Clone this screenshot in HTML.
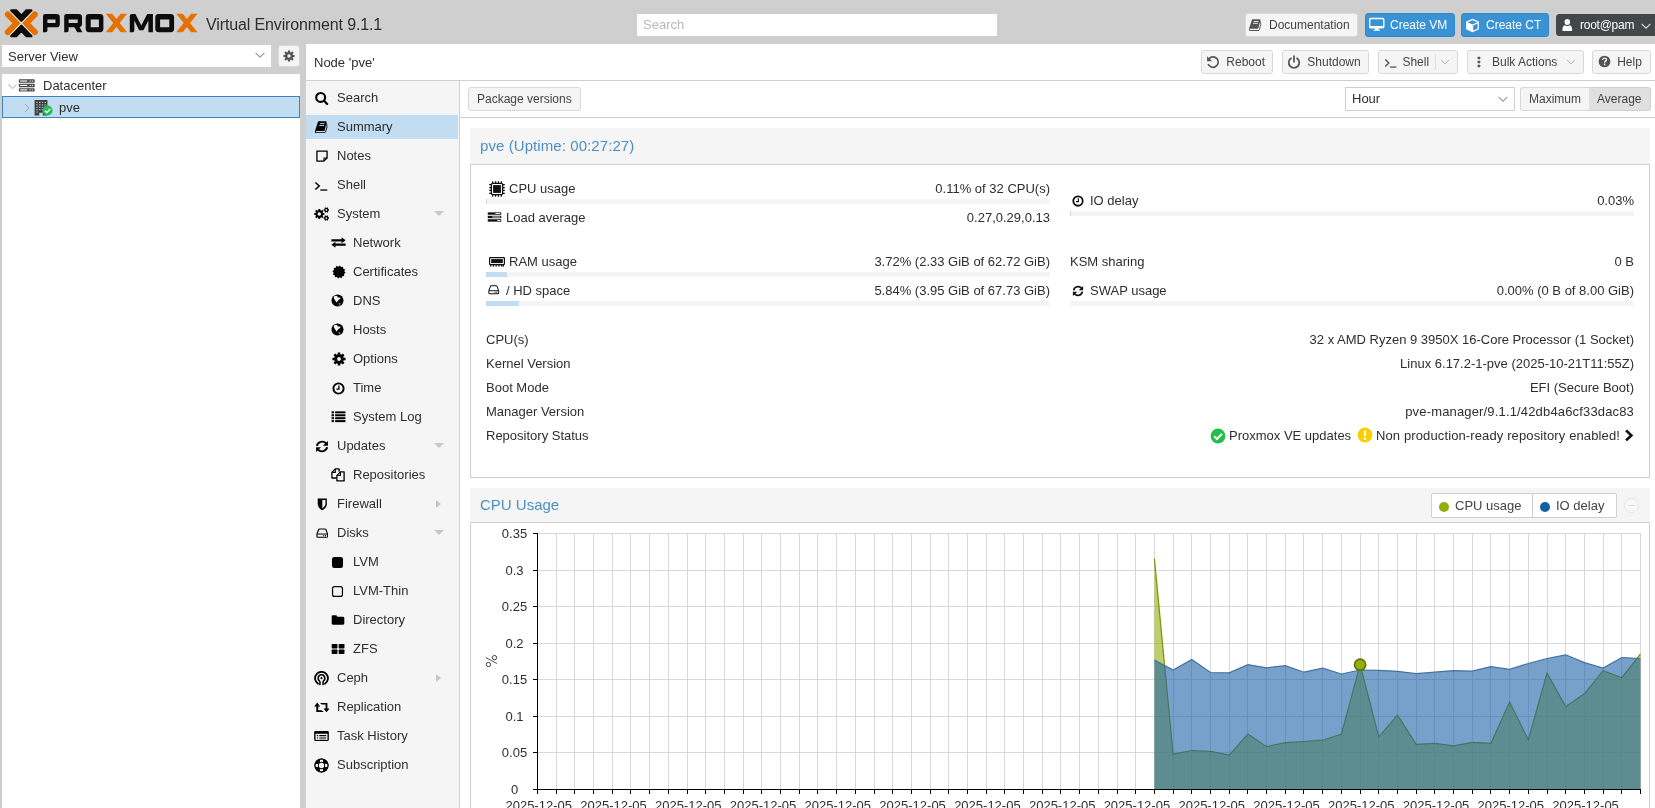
<!DOCTYPE html>
<html>
<head>
<meta charset="utf-8">
<title>pve - Proxmox Virtual Environment</title>
<style>
*{box-sizing:border-box;margin:0;padding:0}
html,body{width:1655px;height:808px;overflow:hidden;background:#cfcfcf;font-family:"Liberation Sans",sans-serif;font-size:13px;color:#2e2e2e}
div,span{position:absolute;white-space:nowrap}
.bx{background:#fff}
.btn{height:24px;border:1px solid #d8d8d8;background:#f5f5f5;border-radius:3px;color:#444;font-size:12px;line-height:22px}
.btn span{top:0}
.blue{background:#3892d4;border-color:#2f87ca;color:#fff}
.dark{background:#424748;border-color:#424748;color:#fff;border-radius:3px 0 0 3px}
.ni{left:306px;width:152px;height:24px;line-height:24px;font-size:13px}
.ni span{left:31px;top:0}
.sub span{left:47px}
.exp{width:0;height:0;border-left:5px solid transparent;border-right:5px solid transparent;border-top:5.5px solid #c8c8c8}
.col{width:0;height:0;border-top:4.5px solid transparent;border-bottom:4.5px solid transparent;border-left:5.5px solid #c8c8c8}
.l{font-size:13px;line-height:16px}
.v{font-size:13px;line-height:16px;text-align:right}
.bar{height:5px;background:#f5f5f5}
.bar i{position:absolute;left:0;top:0;height:5px;background:#c2ddf1;display:block}
.ph{background:#f5f5f5;color:#4a8fc4;font-size:15px}
</style>
</head>
<body>
<div id="w" style="left:0;top:0;width:1655px;height:808px;will-change:transform">
<svg style="position:absolute;left:0;top:0" width="204" height="44" viewBox="0 0 204 44"><path d="M10.92 12.45L31.76 34.03M31.76 12.45L10.92 34.03" stroke="#ebe4da" stroke-width="1.6" fill="none"/><path d="M21.34 20.65L11.39 10.35L16.12 10.35L21.34 15.75L26.56 10.35L31.29 10.35Z M21.34 25.83L11.39 36.13L16.12 36.13L21.34 30.73L26.56 36.13L31.29 36.13Z" fill="#0c0c0c" stroke="#0c0c0c" stroke-width="2.4" stroke-linejoin="round"/><path d="M7.81 14.34L16.40 23.24L7.81 32.14 M34.87 14.34L26.28 23.24L34.87 32.14" fill="none" stroke="#e57000" stroke-width="5.9" stroke-linecap="round" stroke-linejoin="miter"/><g fill="#0c0c0c" fill-rule="evenodd"><path d="M43 32.2V16.2Q43 14 45.2 14H56.6Q59.8 14 59.8 17.2V24.2Q59.8 27.3 56.6 27.3H47.4V30.6Q47.4 32.2 45.8 32.2Z M47.4 19.6H55.5V23H47.4Z"/><path d="M64.2 32.2V16.2Q64.2 14 66.4 14H78.8Q82 14 82 17.2V24.2Q82 26.8 79.6 27.2L82.4 32.2H77.2L74.4 27.3H68.6V30.6Q68.6 32.2 67 32.2Z M68.6 19.6H77.7V23H68.6Z"/><path d="M85.7 17.4Q85.7 14 89.1 14H100Q103.4 14 103.4 17.4V28.8Q103.4 32.2 100 32.2H89.1Q85.7 32.2 85.7 28.8Z M90.7 19.6H98.9V27.2H90.7Z"/><path d="M129.8 32.2V16Q129.8 14 131.8 14H135.4L141.3 25.4L147.2 14H152.9V32.2H148.4V20.6L143.4 30.3H139.2L134.3 20.6V30.6Q134.3 32.2 132.7 32.2Z"/><path d="M155.3 17.4Q155.3 14 158.7 14H170.7Q174.1 14 174.1 17.4V28.8Q174.1 32.2 170.7 32.2H158.7Q155.3 32.2 155.3 28.8Z M160.1 19.6H169.3V27.2H160.1Z"/></g><g fill="#e57000"><path d="M105.8 13.8H112.2L127.1 32.3H120.69999999999999Z M120.69999999999999 13.8H127.1L112.2 32.3H105.8Z"/><path d="M176.3 13.8H182.70000000000002L197.5 32.3H191.1Z M191.1 13.8H197.5L182.70000000000002 32.3H176.3Z"/></g></svg>
<div style="left:206px;top:14px;font-size:16px;line-height:22px;letter-spacing:-0.13px">Virtual Environment 9.1.1</div>
<div class="bx" style="left:637px;top:14px;width:360px;height:22px;color:#b8b8b8;line-height:22px;padding-left:6px">Search</div>
<div class="btn " style="left:1245px;top:13px;width:113px;"><svg style="position:absolute;left:3.2px;top:4.9px;color:#555" width="12.8" height="12" viewBox="0 0 13 12.4" preserveAspectRatio="none"><path d="M3.7 0.2H11Q11.9 0.2 11.6 1.1L9.6 9.4Q9.4 10 8.8 10H0.7Q-0.1 10 0.2 9.2L3 0.8Q3.2 0.2 3.7 0.2Z" fill="currentColor"/><path d="M4.9 2.6H9.6M4.2 4.5H9" stroke="#f5f5f5" stroke-width="0.9"/><path d="M0.6 9.7Q-0.3 11.8 1.5 11.8H10.3" fill="none" stroke="currentColor" stroke-width="1.1"/><path d="M11.5 2.2Q13 5 10.5 11.2" fill="none" stroke="currentColor" stroke-width="0.9"/></svg><span style="left:23px">Documentation</span></div>
<div class="btn blue" style="left:1365px;top:13px;width:90px;"><svg style="position:absolute;left:3.3px;top:3.2px;color:#fff" width="15.5" height="15" viewBox="0 0 16 16" preserveAspectRatio="none"><rect x="0.7" y="1.6" width="14.6" height="10" rx="1.2" fill="none" stroke="currentColor" stroke-width="1.4"/><path d="M0.7 9.6H15.3V11.6H0.7Z" fill="currentColor"/><path d="M6.4 11.6H9.6L10 13.6H11.4V14.6H4.6V13.6H6Z" fill="currentColor"/></svg><span style="left:24px">Create VM</span></div>
<div class="btn blue" style="left:1461px;top:13px;width:88px;"><svg style="position:absolute;left:3px;top:3.5px;color:#fff" width="15" height="15" viewBox="0 0 16 16" preserveAspectRatio="none"><path d="M8 0.8L14.8 3.6V12L8 15.2L1.2 12V3.6Z" fill="currentColor"/><path d="M2.6 4.4L8 6.8L13.4 4.4L8 2.3Z" fill="#3892d4"/><path d="M8.7 8V13.4L13.5 11.2V5.9Z" fill="#3892d4"/></svg><span style="left:24px">Create CT</span></div>
<div class="btn dark" style="left:1556px;top:14px;width:110px;letter-spacing:-0.25px;height:22px;line-height:20px"><svg style="position:absolute;left:3.6px;top:2.6px;color:#fff" width="12.6" height="13.6" viewBox="0 0 16 16" preserveAspectRatio="none"><circle cx="8" cy="4.6" r="3.5" fill="currentColor"/><path d="M1.8 14.6Q1.8 8.6 5 8.4Q6.4 9.4 8 9.4Q9.6 9.4 11 8.4Q14.2 8.6 14.2 14.6Q14.2 15.2 13 15.2H3Q1.8 15.2 1.8 14.6Z" fill="currentColor"/></svg><span style="left:23px">root@pam</span></div>
<svg style="position:absolute;left:1639px;top:19px;color:#ddd" width="14" height="14" viewBox="0 0 16 16" preserveAspectRatio="none"><path d="M3 5.5L8 10.5L13 5.5" fill="none" stroke="currentColor" stroke-width="1.3"/></svg>
<div class="bx" style="left:2px;top:45px;width:269px;height:22px;line-height:24px;padding-left:6px">Server View</div>
<svg style="position:absolute;left:253px;top:48.3px;color:#999" width="14" height="14" viewBox="0 0 16 16" preserveAspectRatio="none"><path d="M3 5.5L8 10.5L13 5.5" fill="none" stroke="currentColor" stroke-width="1.3"/></svg>
<div style="left:278px;top:45px;width:22px;height:22px;background:#f5f5f5;border:1px solid #d8d8d8;border-radius:3px"><svg style="position:absolute;left:4px;top:4px;color:#555" width="12" height="12" viewBox="0 0 16 16" preserveAspectRatio="none"><path fill-rule="evenodd" fill="currentColor" d="M13.30 6.52 L15.47 6.60 L15.47 9.40 L13.30 9.48 L12.79 10.70 L14.27 12.30 L12.30 14.27 L10.70 12.79 L9.48 13.30 L9.40 15.47 L6.60 15.47 L6.52 13.30 L5.30 12.79 L3.70 14.27 L1.73 12.30 L3.21 10.70 L2.70 9.48 L0.53 9.40 L0.53 6.60 L2.70 6.52 L3.21 5.30 L1.73 3.70 L3.70 1.73 L5.30 3.21 L6.52 2.70 L6.60 0.53 L9.40 0.53 L9.48 2.70 L10.70 3.21 L12.30 1.73 L14.27 3.70 L12.79 5.30Z M5.80 8.00 a2.20 2.20 0 1 0 4.40 0 a2.20 2.20 0 1 0 -4.40 0Z"/></svg></div>
<div class="bx" style="left:2px;top:74px;width:298px;height:734px"></div>
<svg style="position:absolute;left:6px;top:80px;color:#bbb" width="13" height="13" viewBox="0 0 16 16" preserveAspectRatio="none"><path d="M3 5.5L8 10.5L13 5.5" fill="none" stroke="currentColor" stroke-width="1.3"/></svg>
<svg style="position:absolute;left:17.5px;top:78px;color:#484848" width="17.5" height="15" viewBox="0 0 16 16" preserveAspectRatio="none"><rect x="0.8" y="1.4" width="14.4" height="3.7" rx="0.6" fill="currentColor"/><rect x="2" y="2.6" width="6.5" height="1.2" fill="#fff"/><rect x="10.6" y="2.6" width="1" height="1.2" fill="#fff"/><rect x="12.6" y="2.6" width="1" height="1.2" fill="#fff"/><rect x="0.8" y="6.1" width="14.4" height="3.7" rx="0.6" fill="currentColor"/><rect x="2" y="7.3" width="6.5" height="1.2" fill="#fff"/><rect x="10.6" y="7.3" width="1" height="1.2" fill="#fff"/><rect x="12.6" y="7.3" width="1" height="1.2" fill="#fff"/><rect x="0.8" y="10.8" width="14.4" height="3.7" rx="0.6" fill="currentColor"/><rect x="2" y="12.1" width="6.5" height="1.2" fill="#fff"/><rect x="10.6" y="12.1" width="1" height="1.2" fill="#fff"/><rect x="12.6" y="12.1" width="1" height="1.2" fill="#fff"/></svg>
<div style="left:43px;top:75px;line-height:22px">Datacenter</div>
<div style="left:2px;top:96px;width:298px;height:22px;background:#c2ddf1;border:1px solid #3a84c2"></div>
<svg style="position:absolute;left:21px;top:101.5px;color:#8fa3b8;transform:rotate(-90deg)" width="12" height="12" viewBox="0 0 16 16" preserveAspectRatio="none"><path d="M3 5.5L8 10.5L13 5.5" fill="none" stroke="currentColor" stroke-width="1.3"/></svg>
<svg style="position:absolute;left:32.5px;top:99px;color:#3e3e3e" width="16" height="17.5" viewBox="0 0 16 16" preserveAspectRatio="none"><path d="M1.6 1H14.4V15H9.8V12.6H6.2V15H1.6Z" fill="currentColor"/><rect x="3.3" y="2.6" width="1.5" height="1.1" fill="#c2ddf1" opacity="0.75"/><rect x="3.3" y="4.8" width="1.5" height="1.1" fill="#c2ddf1" opacity="0.75"/><rect x="3.3" y="7.0" width="1.5" height="1.1" fill="#c2ddf1" opacity="0.75"/><rect x="3.3" y="9.2" width="1.5" height="1.1" fill="#c2ddf1" opacity="0.75"/><rect x="3.3" y="11.4" width="1.5" height="1.1" fill="#c2ddf1" opacity="0.75"/><rect x="6.0" y="2.6" width="1.5" height="1.1" fill="#c2ddf1" opacity="0.75"/><rect x="6.0" y="4.8" width="1.5" height="1.1" fill="#c2ddf1" opacity="0.75"/><rect x="6.0" y="7.0" width="1.5" height="1.1" fill="#c2ddf1" opacity="0.75"/><rect x="6.0" y="9.2" width="1.5" height="1.1" fill="#c2ddf1" opacity="0.75"/><rect x="8.7" y="2.6" width="1.5" height="1.1" fill="#c2ddf1" opacity="0.75"/><rect x="8.7" y="4.8" width="1.5" height="1.1" fill="#c2ddf1" opacity="0.75"/><rect x="8.7" y="7.0" width="1.5" height="1.1" fill="#c2ddf1" opacity="0.75"/><rect x="8.7" y="9.2" width="1.5" height="1.1" fill="#c2ddf1" opacity="0.75"/><rect x="11.4" y="2.6" width="1.5" height="1.1" fill="#c2ddf1" opacity="0.75"/><rect x="11.4" y="4.8" width="1.5" height="1.1" fill="#c2ddf1" opacity="0.75"/><rect x="11.4" y="7.0" width="1.5" height="1.1" fill="#c2ddf1" opacity="0.75"/><rect x="11.4" y="9.2" width="1.5" height="1.1" fill="#c2ddf1" opacity="0.75"/><rect x="11.4" y="11.4" width="1.5" height="1.1" fill="#c2ddf1" opacity="0.75"/></svg>
<svg style="position:absolute;left:42.3px;top:105.3px;color:#21bf4b" width="11" height="11" viewBox="0 0 16 16" preserveAspectRatio="none"><circle cx="8" cy="8" r="7.4" fill="currentColor"/><path d="M4.2 8.2L7 11L12 5.8" fill="none" stroke="#fff" stroke-width="2.1"/></svg>
<div style="left:59px;top:97px;line-height:22px">pve</div>
<div class="bx" style="left:306px;top:44px;width:1349px;height:764px"></div>
<div style="left:306px;top:80px;width:1349px;height:1px;background:#cfcfcf"></div>
<div class="l" style="left:314px;top:55px">Node 'pve'</div>
<div class="btn " style="left:1201px;top:50px;width:72px;"><svg style="position:absolute;left:4px;top:4px;color:#555" width="14" height="14" viewBox="0 0 16 16" preserveAspectRatio="none"><path d="M3.4 4.2A6 6 0 1 1 2.4 10.2" fill="none" stroke="currentColor" stroke-width="1.9"/><path d="M1.2 1.4V7.2H7Z" fill="currentColor"/></svg><span style="left:24.3px">Reboot</span></div>
<div class="btn " style="left:1282px;top:50px;width:87px;"><svg style="position:absolute;left:4px;top:4px;color:#555" width="14" height="14" viewBox="0 0 16 16" preserveAspectRatio="none"><path d="M4.6 3.8A6 6 0 1 0 11.4 3.8" fill="none" stroke="currentColor" stroke-width="2" stroke-linecap="round"/><path d="M8 1.2V7.6" stroke="currentColor" stroke-width="2" stroke-linecap="round"/></svg><span style="left:24.3px">Shutdown</span></div>
<div class="btn " style="left:1378px;top:50px;width:80px;"><svg style="position:absolute;left:5px;top:5px;color:#555" width="13" height="13" viewBox="0 0 16 16" preserveAspectRatio="none"><path d="M1.6 4.2L6 8.6L1.6 13" fill="none" stroke="currentColor" stroke-width="1.7"/><path d="M7.2 13.6H15.2" stroke="currentColor" stroke-width="1.6"/></svg><span style="left:23.4px">Shell</span></div>
<div style="left:1435px;top:54px;width:1px;height:16px;background:#dcdcdc"></div>
<svg style="position:absolute;left:1439px;top:56px;color:#aaa" width="12" height="12" viewBox="0 0 16 16" preserveAspectRatio="none"><path d="M3 5.5L8 10.5L13 5.5" fill="none" stroke="currentColor" stroke-width="1.3"/></svg>
<div class="btn " style="left:1467px;top:50px;width:117px;"><svg style="position:absolute;left:5px;top:5px;color:#555" width="12" height="12" viewBox="0 0 16 16" preserveAspectRatio="none"><rect x="6.2" y="1" width="3.4" height="3.4" rx="0.6" fill="currentColor"/><rect x="6.2" y="6.3" width="3.4" height="3.4" rx="0.6" fill="currentColor"/><rect x="6.2" y="11.6" width="3.4" height="3.4" rx="0.6" fill="currentColor"/></svg><span style="left:24px">Bulk Actions</span></div>
<svg style="position:absolute;left:1565px;top:56px;color:#aaa" width="12" height="12" viewBox="0 0 16 16" preserveAspectRatio="none"><path d="M3 5.5L8 10.5L13 5.5" fill="none" stroke="currentColor" stroke-width="1.3"/></svg>
<div class="btn " style="left:1592px;top:50px;width:59px;"><svg style="position:absolute;left:5px;top:4px;color:#555" width="13" height="13" viewBox="0 0 16 16" preserveAspectRatio="none"><circle cx="8" cy="8" r="7.2" fill="currentColor"/><path d="M5.6 6.2Q5.8 3.8 8 3.8Q10.4 3.8 10.4 5.8Q10.4 7 9.2 7.6Q8.2 8.1 8.2 9.4" fill="none" stroke="#f5f5f5" stroke-width="1.7"/><rect x="7.2" y="10.6" width="1.9" height="1.9" fill="#f5f5f5"/></svg><span style="left:24.2px">Help</span></div>
<div style="left:306px;top:81px;width:153px;height:727px;background:#f5f5f5"></div>
<div style="left:459px;top:81px;width:1px;height:727px;background:#cfcfcf"></div>
<div class="ni" style="top:86px;"><svg style="position:absolute;left:9px;top:5px;color:#000" width="14" height="14" viewBox="0 0 14 14" preserveAspectRatio="none"><circle cx="5.65" cy="6.4" r="4.45" fill="none" stroke="currentColor" stroke-width="2.1"/><path d="M9 9.7L12.2 13" stroke="currentColor" stroke-width="2.1" stroke-linecap="round"/></svg><span>Search</span></div>
<div class="ni" style="top:115px;background:#c2ddf1;"><svg style="position:absolute;left:9.2px;top:5.8px;color:#000" width="13" height="12.4" viewBox="0 0 13 12.4" preserveAspectRatio="none"><path d="M3.7 0.2H11Q11.9 0.2 11.6 1.1L9.6 9.4Q9.4 10 8.8 10H0.7Q-0.1 10 0.2 9.2L3 0.8Q3.2 0.2 3.7 0.2Z" fill="currentColor"/><path d="M4.9 2.6H9.6M4.2 4.5H9" stroke="#c2ddf1" stroke-width="0.9"/><path d="M0.6 9.7Q-0.3 11.8 1.5 11.8H10.3" fill="none" stroke="currentColor" stroke-width="1.1"/><path d="M11.5 2.2Q13 5 10.5 11.2" fill="none" stroke="currentColor" stroke-width="0.9"/></svg><span>Summary</span></div>
<div class="ni" style="top:144px;"><svg style="position:absolute;left:9px;top:5px;color:#000" width="14" height="14" viewBox="0 0 16 16" preserveAspectRatio="none"><path d="M2.2 2.4H13.8V10.2L10.2 13.8H2.2Z" fill="none" stroke="currentColor" stroke-width="1.5" stroke-linejoin="round"/><path d="M10.2 13.8V10.2H13.8" fill="none" stroke="currentColor" stroke-width="1.2"/></svg><span>Notes</span></div>
<div class="ni" style="top:173px;"><svg style="position:absolute;left:8px;top:6px;color:#000" width="14" height="13" viewBox="0 0 16 16" preserveAspectRatio="none"><path d="M1.6 4.2L6 8.6L1.6 13" fill="none" stroke="currentColor" stroke-width="1.7"/><path d="M7.2 13.6H15.2" stroke="currentColor" stroke-width="1.6"/></svg><span>Shell</span></div>
<div class="ni" style="top:202px;"><svg style="position:absolute;left:8px;top:5px;color:#000" width="16" height="14" viewBox="0 0 16 14" preserveAspectRatio="none"><path fill-rule="evenodd" fill="currentColor" d="M8.96 5.99 L10.32 6.08 L10.32 7.92 L8.96 8.01 L8.60 8.88 L9.50 9.90 L8.20 11.20 L7.18 10.30 L6.31 10.66 L6.22 12.02 L4.38 12.02 L4.29 10.66 L3.42 10.30 L2.40 11.20 L1.10 9.90 L2.00 8.88 L1.64 8.01 L0.28 7.92 L0.28 6.08 L1.64 5.99 L2.00 5.12 L1.10 4.10 L2.40 2.80 L3.42 3.70 L4.29 3.34 L4.38 1.98 L6.22 1.98 L6.31 3.34 L7.18 3.70 L8.20 2.80 L9.50 4.10 L8.60 5.12Z M3.55 7.00 a1.75 1.75 0 1 0 3.50 0 a1.75 1.75 0 1 0 -3.50 0Z"/><path fill-rule="evenodd" fill="currentColor" d="M14.15 2.21 L15.05 2.22 L15.05 3.68 L14.15 3.69 L13.89 4.14 L14.33 4.93 L13.07 5.66 L12.61 4.88 L12.09 4.88 L11.63 5.66 L10.37 4.93 L10.81 4.14 L10.55 3.69 L9.65 3.68 L9.65 2.22 L10.55 2.21 L10.81 1.76 L10.37 0.97 L11.63 0.24 L12.09 1.02 L12.61 1.02 L13.07 0.24 L14.33 0.97 L13.89 1.76Z M11.50 2.95 a0.85 0.85 0 1 0 1.70 0 a0.85 0.85 0 1 0 -1.70 0Z"/><path fill-rule="evenodd" fill="currentColor" d="M14.15 10.31 L15.05 10.32 L15.05 11.78 L14.15 11.79 L13.89 12.24 L14.33 13.03 L13.07 13.76 L12.61 12.98 L12.09 12.98 L11.63 13.76 L10.37 13.03 L10.81 12.24 L10.55 11.79 L9.65 11.78 L9.65 10.32 L10.55 10.31 L10.81 9.86 L10.37 9.07 L11.63 8.34 L12.09 9.12 L12.61 9.12 L13.07 8.34 L14.33 9.07 L13.89 9.86Z M11.50 11.05 a0.85 0.85 0 1 0 1.70 0 a0.85 0.85 0 1 0 -1.70 0Z"/></svg><span>System</span><div class="exp" style="left:128px;top:8.5px"></div></div>
<div class="ni sub" style="top:231px;"><svg style="position:absolute;left:24.6px;top:6px;color:#000" width="15" height="11" viewBox="0 0 15 11" preserveAspectRatio="none"><path d="M0.4 2.2H10.6V0.2L14.6 3.3L10.6 6.2V4.4H0.4Z" fill="currentColor"/><path d="M14.6 8.8H4.4V10.8L0.4 7.7L4.4 4.8V6.6H14.6Z" fill="currentColor"/></svg><span>Network</span></div>
<div class="ni sub" style="top:260px;"><svg style="position:absolute;left:25.6px;top:5px;color:#000" width="14" height="14" viewBox="0 0 16 16" preserveAspectRatio="none"><path fill="currentColor" d="M15.54 8.99 L13.64 10.33 L14.03 12.62 L11.72 12.84 L10.91 15.02 L8.80 14.05 L7.01 15.54 L5.67 13.64 L3.38 14.03 L3.16 11.72 L0.98 10.91 L1.95 8.80 L0.46 7.01 L2.36 5.67 L1.97 3.38 L4.28 3.16 L5.09 0.98 L7.20 1.95 L8.99 0.46 L10.33 2.36 L12.62 1.97 L12.84 4.28 L15.02 5.09 L14.05 7.20Z"/></svg><span>Certificates</span></div>
<div class="ni sub" style="top:289px;"><svg style="position:absolute;left:25.3px;top:5px;color:#000" width="13" height="13" viewBox="0 0 16 16" preserveAspectRatio="none"><circle cx="8" cy="8" r="7.4" fill="currentColor"/><path d="M3.4 3.3L5 2.2L7.7 2.5L8.2 4.3H10L11.8 4.6L11.3 5.8L9 7.6L7.7 9.3L6.7 10.4L5.7 8.9L4 6.3L3.4 4.6Z" fill="#f5f5f5"/><path d="M9.3 11.7H11.6L11.2 13H9.6Z" fill="#f5f5f5"/></svg><span>DNS</span></div>
<div class="ni sub" style="top:318px;"><svg style="position:absolute;left:25.3px;top:5px;color:#000" width="13" height="13" viewBox="0 0 16 16" preserveAspectRatio="none"><circle cx="8" cy="8" r="7.4" fill="currentColor"/><path d="M3.4 3.3L5 2.2L7.7 2.5L8.2 4.3H10L11.8 4.6L11.3 5.8L9 7.6L7.7 9.3L6.7 10.4L5.7 8.9L4 6.3L3.4 4.6Z" fill="#f5f5f5"/><path d="M9.3 11.7H11.6L11.2 13H9.6Z" fill="#f5f5f5"/></svg><span>Hosts</span></div>
<div class="ni sub" style="top:347px;"><svg style="position:absolute;left:25.6px;top:5px;color:#000" width="14" height="14" viewBox="0 0 16 16" preserveAspectRatio="none"><path fill-rule="evenodd" fill="currentColor" d="M13.30 6.52 L15.47 6.60 L15.47 9.40 L13.30 9.48 L12.79 10.70 L14.27 12.30 L12.30 14.27 L10.70 12.79 L9.48 13.30 L9.40 15.47 L6.60 15.47 L6.52 13.30 L5.30 12.79 L3.70 14.27 L1.73 12.30 L3.21 10.70 L2.70 9.48 L0.53 9.40 L0.53 6.60 L2.70 6.52 L3.21 5.30 L1.73 3.70 L3.70 1.73 L5.30 3.21 L6.52 2.70 L6.60 0.53 L9.40 0.53 L9.48 2.70 L10.70 3.21 L12.30 1.73 L14.27 3.70 L12.79 5.30Z M5.80 8.00 a2.20 2.20 0 1 0 4.40 0 a2.20 2.20 0 1 0 -4.40 0Z"/></svg><span>Options</span></div>
<div class="ni sub" style="top:376px;"><svg style="position:absolute;left:25.8px;top:5.6px;color:#000" width="13" height="13" viewBox="0 0 16 16" preserveAspectRatio="none"><circle cx="8" cy="8" r="6.3" fill="none" stroke="currentColor" stroke-width="2.4"/><path d="M8.5 4.4V8.7H5.4" fill="none" stroke="currentColor" stroke-width="1.6"/></svg><span>Time</span></div>
<div class="ni sub" style="top:405px;"><svg style="position:absolute;left:24.8px;top:5.2px;color:#000" width="15" height="13.4" viewBox="0 0 16 16" preserveAspectRatio="none"><rect x="0.6" y="1.6" width="2.6" height="2.4" fill="currentColor"/><rect x="4.4" y="1.6" width="11" height="2.4" fill="currentColor"/><rect x="0.6" y="5.1" width="2.6" height="2.4" fill="currentColor"/><rect x="4.4" y="5.1" width="11" height="2.4" fill="currentColor"/><rect x="0.6" y="8.6" width="2.6" height="2.4" fill="currentColor"/><rect x="4.4" y="8.6" width="11" height="2.4" fill="currentColor"/><rect x="0.6" y="12.1" width="2.6" height="2.4" fill="currentColor"/><rect x="4.4" y="12.1" width="11" height="2.4" fill="currentColor"/></svg><span>System Log</span></div>
<div class="ni" style="top:434px;"><svg style="position:absolute;left:9px;top:6px;color:#000" width="14" height="13" viewBox="0 0 16 16" preserveAspectRatio="none"><path d="M2.2 7.2A6 6 0 0 1 12.6 4.1" fill="none" stroke="currentColor" stroke-width="2.3"/><path d="M14.8 1.2V7H9Z" fill="currentColor"/><path d="M13.8 8.8A6 6 0 0 1 3.4 11.9" fill="none" stroke="currentColor" stroke-width="2.3"/><path d="M1.2 14.8V9H7Z" fill="currentColor"/></svg><span>Updates</span><div class="exp" style="left:128px;top:8.5px"></div></div>
<div class="ni sub" style="top:463px;"><svg style="position:absolute;left:25px;top:5px;color:#000" width="14" height="14" viewBox="0 0 14 14" preserveAspectRatio="none"><path d="M8.1 3.7V0.9H4.3L0.9 4.4V10H5.7" fill="none" stroke="currentColor" stroke-width="1.3" stroke-linejoin="round"/><path d="M4.3 0.9V4.4H0.9" fill="none" stroke="currentColor" stroke-width="1.1"/><path d="M9.4 3.9H13.1V12.9H5.9V7.4Z" fill="none" stroke="currentColor" stroke-width="1.3" stroke-linejoin="round"/><path d="M9.4 3.9V7.4H5.9" fill="none" stroke="currentColor" stroke-width="1.1"/></svg><span>Repositories</span></div>
<div class="ni" style="top:492px;"><svg style="position:absolute;left:9.5px;top:4.8px;color:#000" width="12.6" height="14" viewBox="0 0 16 16" preserveAspectRatio="none"><path d="M2.2 1.6H13.8V8Q13.8 12.2 8 15.2Q2.2 12.2 2.2 8Z" fill="currentColor"/><path d="M8 3.4H12V8Q12 10.8 8 13.2Z" fill="#f5f5f5"/></svg><span>Firewall</span><div class="col" style="left:129.5px;top:7.5px"></div></div>
<div class="ni" style="top:521px;"><svg style="position:absolute;left:9.6px;top:6px;color:#000" width="12.6" height="12" viewBox="0 0 16 16" preserveAspectRatio="none"><path d="M1.2 9.4L3.4 3.4Q3.7 2.6 4.6 2.6H11.4Q12.3 2.6 12.6 3.4L14.8 9.4V12.6Q14.8 13.6 13.8 13.6H2.2Q1.2 13.6 1.2 12.6Z" fill="none" stroke="currentColor" stroke-width="1.4" stroke-linejoin="round"/><path d="M1.4 9.4H14.6" stroke="currentColor" stroke-width="1.3"/><circle cx="12.2" cy="11.5" r="0.8" fill="currentColor"/><circle cx="9.8" cy="11.5" r="0.8" fill="currentColor"/></svg><span>Disks</span><div class="exp" style="left:128px;top:8.5px"></div></div>
<div class="ni sub" style="top:550px;"><svg style="position:absolute;left:25px;top:5.5px;color:#000" width="13" height="13" viewBox="0 0 16 16" preserveAspectRatio="none"><rect x="1.2" y="1.2" width="13.6" height="13.6" rx="2.8" fill="currentColor"/></svg><span>LVM</span></div>
<div class="ni sub" style="top:579px;"><svg style="position:absolute;left:25px;top:5.5px;color:#000" width="13" height="13" viewBox="0 0 16 16" preserveAspectRatio="none"><rect x="1.9" y="1.9" width="12.2" height="12.2" rx="2.4" fill="none" stroke="currentColor" stroke-width="1.5"/></svg><span>LVM-Thin</span></div>
<div class="ni sub" style="top:608px;"><svg style="position:absolute;left:25px;top:6px;color:#000" width="14" height="12" viewBox="0 0 16 16" preserveAspectRatio="none"><path d="M0.8 3.2Q0.8 1.8 2.2 1.8H5.6Q7 1.8 7 3.2V3.8H13.8Q15.2 3.8 15.2 5.2V12.8Q15.2 14.2 13.8 14.2H2.2Q0.8 14.2 0.8 12.8Z" fill="currentColor"/></svg><span>Directory</span></div>
<div class="ni sub" style="top:637px;"><svg style="position:absolute;left:25px;top:6px;color:#000" width="14" height="12" viewBox="0 0 16 16" preserveAspectRatio="none"><rect x="0.8" y="1.4" width="6.6" height="5.8" rx="0.8" fill="currentColor"/><rect x="8.8" y="1.4" width="6.6" height="5.8" rx="0.8" fill="currentColor"/><rect x="0.8" y="8.8" width="6.6" height="5.8" rx="0.8" fill="currentColor"/><rect x="8.8" y="8.8" width="6.6" height="5.8" rx="0.8" fill="currentColor"/></svg><span>ZFS</span></div>
<div class="ni" style="top:666px;"><svg style="position:absolute;left:8px;top:5px;color:#000" width="15" height="15" viewBox="0 0 16 16" preserveAspectRatio="none"><path d="M4.3 13.6A6.9 6.9 0 1 1 11.7 13.6" fill="none" stroke="currentColor" stroke-width="1.9" stroke-linecap="round"/><path d="M6.3 14.4Q6.9 11.6 5.7 10.4A3.6 3.6 0 1 1 10.3 10.4Q9.1 11.6 9.7 14.4" fill="none" stroke="currentColor" stroke-width="1.7" stroke-linecap="round"/><circle cx="8" cy="7.6" r="1.1" fill="currentColor"/></svg><span>Ceph</span><div class="col" style="left:129.5px;top:7.5px"></div></div>
<div class="ni" style="top:695px;"><svg style="position:absolute;left:8px;top:7px;color:#000" width="16" height="11" viewBox="0 0 16 11" preserveAspectRatio="none"><path d="M3.2 0.6L6.2 4.6H4.2V8.3H7.6L9.9 9.9H2.3V4.6H0.2Z" fill="currentColor"/><path d="M12.5 10.2L9.5 6.4H11.6V2.6H7.7L5.9 1.1H13.4V6.4H15.6Z" fill="currentColor"/></svg><span>Replication</span></div>
<div class="ni" style="top:724px;"><svg style="position:absolute;left:8px;top:6px;color:#000" width="15" height="12" viewBox="0 0 16 16" preserveAspectRatio="none"><rect x="0.9" y="2" width="14.2" height="12" rx="1" fill="none" stroke="currentColor" stroke-width="1.5"/><rect x="0.9" y="2" width="14.2" height="3" fill="currentColor"/><path d="M3 7.3H4.4M5.6 7.3H13M3 9.6H4.4M5.6 9.6H13M3 11.9H4.4M5.6 11.9H13" stroke="currentColor" stroke-width="1.1"/></svg><span>Task History</span></div>
<div class="ni" style="top:753px;"><svg style="position:absolute;left:8px;top:5px;color:#000" width="15" height="15" viewBox="0 0 16 16" preserveAspectRatio="none"><circle cx="8" cy="8" r="7.5" fill="currentColor"/><path d="M8 1.5V14.5M1.5 8H14.5" stroke="#f5f5f5" stroke-width="3.3"/><circle cx="8" cy="8" r="7" fill="none" stroke="currentColor" stroke-width="1.1"/><circle cx="8" cy="8" r="3.4" fill="#f5f5f5" stroke="currentColor" stroke-width="1.1"/></svg><span>Subscription</span></div>
<div style="left:460px;top:117px;width:1195px;height:1px;background:#cfcfcf"></div>
<div class="btn " style="left:468px;top:87px;width:113px;"><span style="left:8px">Package versions</span></div>
<div class="bx" style="left:1345px;top:87px;width:170px;height:24px;border:1px solid #cfcfcf;line-height:22px;padding-left:6px">Hour</div>
<svg style="position:absolute;left:1496px;top:92px;color:#999" width="14" height="14" viewBox="0 0 16 16" preserveAspectRatio="none"><path d="M3 5.5L8 10.5L13 5.5" fill="none" stroke="currentColor" stroke-width="1.3"/></svg>
<div class="btn " style="left:1520px;top:87px;width:69px;border-radius:3px 0 0 3px;border-right:0"><span style="left:8px">Maximum</span></div>
<div class="btn " style="left:1589px;top:87px;width:62px;border-radius:0 3px 3px 0;background:#e0e0e0;border-color:#d0d0d0;border-left:0"><span style="left:8px">Average</span></div>
<div class="ph" style="left:470px;top:128px;width:1180px;height:36px;line-height:36px;padding-left:10px;letter-spacing:0.08px">pve (Uptime: 00:27:27)</div>
<div class="bx" style="left:470px;top:164px;width:1180px;height:314px;border:1px solid #cfcfcf"></div>
<svg style="position:absolute;left:489px;top:181px;color:#111" width="16" height="16" viewBox="0 0 16 16" preserveAspectRatio="none"><rect x="2.35" y="2.35" width="11.3" height="11.3" rx="1.4" fill="none" stroke="currentColor" stroke-width="1.3"/><rect x="4.1" y="4.1" width="7.8" height="7.8" fill="currentColor"/><path d="M3.7 0.2V2M3.7 14V15.8M0.2 3.7H2M14 3.7H15.8" stroke="currentColor" stroke-width="1.2"/><path d="M6.6 0.2V2M6.6 14V15.8M0.2 6.6H2M14 6.6H15.8" stroke="currentColor" stroke-width="1.2"/><path d="M9.4 0.2V2M9.4 14V15.8M0.2 9.4H2M14 9.4H15.8" stroke="currentColor" stroke-width="1.2"/><path d="M12.3 0.2V2M12.3 14V15.8M0.2 12.3H2M14 12.3H15.8" stroke="currentColor" stroke-width="1.2"/></svg>
<div class="l" style="left:509px;top:181px">CPU usage</div>
<div class="v" style="right:605px;top:181px">0.11% of 32 CPU(s)</div>
<div class="bar" style="left:486px;top:199px;width:564px"><i style="width:0.6px"></i></div>
<svg style="position:absolute;left:487px;top:211px;color:#111" width="15" height="12" viewBox="0 0 16 16" preserveAspectRatio="none"><rect x="0.8" y="1.8" width="14.4" height="3.2" fill="currentColor"/><rect x="9.0" y="2.8" width="5.2" height="1.2" fill="#fff"/><rect x="0.8" y="6.4" width="14.4" height="3.2" fill="currentColor"/><rect x="5.6" y="7.4" width="8.6" height="1.2" fill="#fff"/><rect x="0.8" y="11.0" width="14.4" height="3.2" fill="currentColor"/><rect x="11.0" y="12.0" width="3.2" height="1.2" fill="#fff"/></svg>
<div class="l" style="left:506px;top:210px">Load average</div>
<div class="v" style="right:605px;top:210px">0.27,0.29,0.13</div>
<svg style="position:absolute;left:489.1px;top:257.1px;color:#111" width="16" height="10" viewBox="0 0 16 10" preserveAspectRatio="none"><rect x="0.6" y="0.6" width="14.8" height="7" rx="0.5" fill="none" stroke="currentColor" stroke-width="1.2"/><rect x="2.2" y="2.1" width="11.6" height="4" fill="currentColor"/><rect x="1.1" y="7.8" width="1.3" height="1.8" fill="currentColor"/><rect x="3.8" y="7.8" width="1.3" height="1.8" fill="currentColor"/><rect x="6.5" y="7.8" width="1.3" height="1.8" fill="currentColor"/><rect x="9.2" y="7.8" width="1.3" height="1.8" fill="currentColor"/><rect x="11.9" y="7.8" width="1.3" height="1.8" fill="currentColor"/><rect x="13.7" y="7.8" width="1.3" height="1.8" fill="currentColor"/></svg>
<div class="l" style="left:509px;top:254px">RAM usage</div>
<div class="v" style="right:605px;top:254px">3.72% (2.33 GiB of 62.72 GiB)</div>
<div class="bar" style="left:486px;top:272px;width:564px"><i style="width:21.0px"></i></div>
<svg style="position:absolute;left:488.4px;top:284.2px;color:#111" width="11.5" height="11.4" viewBox="0 0 16 16" preserveAspectRatio="none"><path d="M1.2 9.4L3.4 3.4Q3.7 2.6 4.6 2.6H11.4Q12.3 2.6 12.6 3.4L14.8 9.4V12.6Q14.8 13.6 13.8 13.6H2.2Q1.2 13.6 1.2 12.6Z" fill="none" stroke="currentColor" stroke-width="1.4" stroke-linejoin="round"/><path d="M1.4 9.4H14.6" stroke="currentColor" stroke-width="1.3"/><circle cx="12.2" cy="11.5" r="0.8" fill="currentColor"/><circle cx="9.8" cy="11.5" r="0.8" fill="currentColor"/></svg>
<div class="l" style="left:506px;top:283px">/ HD space</div>
<div class="v" style="right:605px;top:283px">5.84% (3.95 GiB of 67.73 GiB)</div>
<div class="bar" style="left:486px;top:301px;width:564px"><i style="width:32.9px"></i></div>
<svg style="position:absolute;left:1072px;top:195px;color:#111" width="12" height="12" viewBox="0 0 16 16" preserveAspectRatio="none"><circle cx="8" cy="8" r="6.3" fill="none" stroke="currentColor" stroke-width="2.4"/><path d="M8.5 4.4V8.7H5.4" fill="none" stroke="currentColor" stroke-width="1.6"/></svg>
<div class="l" style="left:1090px;top:193px">IO delay</div>
<div class="v" style="right:21px;top:193px">0.03%</div>
<div class="bar" style="left:1070px;top:211px;width:564px"><i style="width:0.2px"></i></div>
<div class="l" style="left:1070px;top:254px">KSM sharing</div>
<div class="v" style="right:21px;top:254px">0 B</div>
<svg style="position:absolute;left:1072px;top:285px;color:#111" width="12" height="12" viewBox="0 0 16 16" preserveAspectRatio="none"><path d="M2.2 7.2A6 6 0 0 1 12.6 4.1" fill="none" stroke="currentColor" stroke-width="2.3"/><path d="M14.8 1.2V7H9Z" fill="currentColor"/><path d="M13.8 8.8A6 6 0 0 1 3.4 11.9" fill="none" stroke="currentColor" stroke-width="2.3"/><path d="M1.2 14.8V9H7Z" fill="currentColor"/></svg>
<div class="l" style="left:1090px;top:283px">SWAP usage</div>
<div class="v" style="right:21px;top:283px">0.00% (0 B of 8.00 GiB)</div>
<div class="bar" style="left:1070px;top:301px;width:564px"></div>
<div class="l" style="left:486px;top:332px">CPU(s)</div>
<div class="v" style="right:21px;top:332px">32 x AMD Ryzen 9 3950X 16-Core Processor (1 Socket)</div>
<div class="l" style="left:486px;top:356px">Kernel Version</div>
<div class="v" style="right:21px;top:356px">Linux 6.17.2-1-pve (2025-10-21T11:55Z)</div>
<div class="l" style="left:486px;top:380px">Boot Mode</div>
<div class="v" style="right:21px;top:380px">EFI (Secure Boot)</div>
<div class="l" style="left:486px;top:404px">Manager Version</div>
<div class="v" style="right:21px;top:404px"><span style="position:static;letter-spacing:0.16px">pve-manager/9.1.1/42db4a6cf33dac83</span></div>
<div class="l" style="left:486px;top:428px">Repository Status</div>
<svg style="position:absolute;left:1210.3px;top:427.6px;color:#21bf4b" width="16" height="16" viewBox="0 0 16 16" preserveAspectRatio="none"><circle cx="8" cy="8" r="7.4" fill="currentColor"/><path d="M4.2 8.2L7 11L12 5.8" fill="none" stroke="#fff" stroke-width="2.1"/></svg>
<div class="l" style="left:1229px;top:428px">Proxmox VE updates</div>
<svg style="position:absolute;left:1357.2px;top:427.4px;color:#fc0" width="16" height="16" viewBox="0 0 16 16" preserveAspectRatio="none"><circle cx="8" cy="8" r="7.4" fill="currentColor"/><path d="M8 3.4V9.2" stroke="#fff" stroke-width="2.2"/><rect x="6.9" y="10.6" width="2.2" height="2.2" fill="#fff"/></svg>
<div class="l" style="left:1376px;top:428px;letter-spacing:0.12px">Non production-ready repository enabled!</div>
<svg style="position:absolute;left:1622.2px;top:429px;color:#111" width="13.6" height="12.8" viewBox="0 0 16 16" preserveAspectRatio="none"><path d="M4.8 1.8L11 8L4.8 14.2" fill="none" stroke="currentColor" stroke-width="3.2"/></svg>
<div class="ph" style="left:470px;top:488px;width:1180px;height:34px;line-height:34px;padding-left:10px">CPU Usage</div>
<div class="bx" style="left:470px;top:522px;width:1180px;height:300px;border:1px solid #cfcfcf"></div>
<div class="bx" style="left:1431px;top:493px;width:186px;height:25px;border:1px solid #cfcfcf;border-radius:2px"></div>
<div style="left:1532px;top:494px;width:1px;height:23px;background:#cfcfcf"></div>
<div style="left:1439px;top:502px;width:10px;height:10px;border-radius:50%;background:#94ae0a"></div>
<div class="l" style="left:1455px;top:498px;color:#444">CPU usage</div>
<div style="left:1540px;top:502px;width:10px;height:10px;border-radius:50%;background:#115fa6"></div>
<div class="l" style="left:1556px;top:498px;color:#444">IO delay</div>
<div style="left:1624px;top:498px;width:15px;height:15px;border-radius:50%;border:1px solid #e6e6e6;background:#f8f8f8"></div><div style="left:1628px;top:505px;width:7px;height:1px;background:#e0e0e0"></div>
<svg style="position:absolute;left:0;top:0;pointer-events:none" width="1655" height="808" viewBox="0 0 1655 808"><path d="M537 789.5H1641M537 752.5H1641M537 716.5H1641M537 679.5H1641M537 643.5H1641M537 606.5H1641M537 570.5H1641M537 533.5H1641M556.5 533V789M574.5 533V789M593.5 533V789M612.5 533V789M630.5 533V789M649.5 533V789M668.5 533V789M687.5 533V789M705.5 533V789M724.5 533V789M743.5 533V789M761.5 533V789M780.5 533V789M799.5 533V789M817.5 533V789M836.5 533V789M855.5 533V789M874.5 533V789M892.5 533V789M911.5 533V789M930.5 533V789M948.5 533V789M967.5 533V789M986.5 533V789M1004.5 533V789M1023.5 533V789M1042.5 533V789M1060.5 533V789M1079.5 533V789M1098.5 533V789M1117.5 533V789M1135.5 533V789M1154.5 533V789M1173.5 533V789M1191.5 533V789M1210.5 533V789M1229.5 533V789M1247.5 533V789M1266.5 533V789M1285.5 533V789M1303.5 533V789M1322.5 533V789M1341.5 533V789M1360.5 533V789M1378.5 533V789M1397.5 533V789M1416.5 533V789M1434.5 533V789M1453.5 533V789M1472.5 533V789M1490.5 533V789M1509.5 533V789M1528.5 533V789M1547.5 533V789M1565.5 533V789M1584.5 533V789M1603.5 533V789M1621.5 533V789M1640.5 533V789" stroke="#d8d8d8" stroke-width="1" fill="none"/><g><path d="M1154.4 789.5 L1154.4 558.6 L1173.1 754.2 L1191.8 750.5 L1210.5 751.4 L1229.2 755.1 L1247.9 734.1 L1266.6 746.7 L1285.3 742.7 L1304.0 741.5 L1322.7 740.2 L1341.4 734.1 L1360.1 664.7 L1378.8 736.8 L1397.5 714.9 L1416.2 744.3 L1434.9 743.3 L1453.6 745.8 L1472.2 742.4 L1490.9 743.3 L1509.6 702.2 L1528.3 739.6 L1547.0 673.1 L1565.7 706.5 L1584.4 693.8 L1603.1 670.6 L1621.8 677.7 L1640.5 653.9 L1640.5 789.5 Z" fill="#94ae0a" fill-opacity="0.6"/><path d="M1154.4 558.6 L1173.1 754.2 L1191.8 750.5 L1210.5 751.4 L1229.2 755.1 L1247.9 734.1 L1266.6 746.7 L1285.3 742.7 L1304.0 741.5 L1322.7 740.2 L1341.4 734.1 L1360.1 664.7 L1378.8 736.8 L1397.5 714.9 L1416.2 744.3 L1434.9 743.3 L1453.6 745.8 L1472.2 742.4 L1490.9 743.3 L1509.6 702.2 L1528.3 739.6 L1547.0 673.1 L1565.7 706.5 L1584.4 693.8 L1603.1 670.6 L1621.8 677.7 L1640.5 653.9" fill="none" stroke="#7c9208" stroke-width="1.2"/><path d="M1154.4 789.5 L1154.4 660.1 L1173.1 670.0 L1191.8 659.5 L1210.5 672.5 L1229.2 672.8 L1247.9 664.7 L1266.6 667.8 L1285.3 665.7 L1304.0 672.2 L1322.7 668.1 L1341.4 674.0 L1360.1 670.0 L1378.8 670.3 L1397.5 671.3 L1416.2 673.7 L1434.9 672.2 L1453.6 670.6 L1472.2 671.2 L1490.9 666.6 L1509.6 669.4 L1528.3 663.5 L1547.0 658.5 L1565.7 654.8 L1584.4 662.6 L1603.1 668.1 L1621.8 657.6 L1640.5 658.5 L1640.5 789.5 Z" fill="#1c63a9" fill-opacity="0.6"/><path d="M1154.4 660.1 L1173.1 670.0 L1191.8 659.5 L1210.5 672.5 L1229.2 672.8 L1247.9 664.7 L1266.6 667.8 L1285.3 665.7 L1304.0 672.2 L1322.7 668.1 L1341.4 674.0 L1360.1 670.0 L1378.8 670.3 L1397.5 671.3 L1416.2 673.7 L1434.9 672.2 L1453.6 670.6 L1472.2 671.2 L1490.9 666.6 L1509.6 669.4 L1528.3 663.5 L1547.0 658.5 L1565.7 654.8 L1584.4 662.6 L1603.1 668.1 L1621.8 657.6 L1640.5 658.5" fill="none" stroke="#44729e" stroke-width="1.2"/></g><path d="M537.5 533V790M537 789.5H1641M533 789.5H537M533 752.5H537M533 716.5H537M533 679.5H537M533 643.5H537M533 606.5H537M533 570.5H537M533 533.5H537M537.5 790V794M556.5 790V794M574.5 790V794M593.5 790V794M612.5 790V794M630.5 790V794M649.5 790V794M668.5 790V794M687.5 790V794M705.5 790V794M724.5 790V794M743.5 790V794M761.5 790V794M780.5 790V794M799.5 790V794M817.5 790V794M836.5 790V794M855.5 790V794M874.5 790V794M892.5 790V794M911.5 790V794M930.5 790V794M948.5 790V794M967.5 790V794M986.5 790V794M1004.5 790V794M1023.5 790V794M1042.5 790V794M1060.5 790V794M1079.5 790V794M1098.5 790V794M1117.5 790V794M1135.5 790V794M1154.5 790V794M1173.5 790V794M1191.5 790V794M1210.5 790V794M1229.5 790V794M1247.5 790V794M1266.5 790V794M1285.5 790V794M1303.5 790V794M1322.5 790V794M1341.5 790V794M1360.5 790V794M1378.5 790V794M1397.5 790V794M1416.5 790V794M1434.5 790V794M1453.5 790V794M1472.5 790V794M1490.5 790V794M1509.5 790V794M1528.5 790V794M1547.5 790V794M1565.5 790V794M1584.5 790V794M1603.5 790V794M1621.5 790V794M1640.5 790V794" stroke="#000" stroke-width="1" fill="none"/><circle cx="1360.1" cy="664.7" r="5.6" fill="#94ae0a" stroke="#5f7006" stroke-width="1.6"/><g font-family="Liberation Sans, sans-serif" font-size="13" fill="#2e2e2e"><text x="514.5" y="794.0" text-anchor="middle">0</text><text x="514.5" y="757.4" text-anchor="middle">0.05</text><text x="514.5" y="720.9" text-anchor="middle">0.1</text><text x="514.5" y="684.3" text-anchor="middle">0.15</text><text x="514.5" y="647.7" text-anchor="middle">0.2</text><text x="514.5" y="611.1" text-anchor="middle">0.25</text><text x="514.5" y="574.6" text-anchor="middle">0.3</text><text x="514.5" y="538.0" text-anchor="middle">0.35</text><text x="538.7" y="809.8" text-anchor="middle">2025-12-05</text><text x="613.5" y="809.8" text-anchor="middle">2025-12-05</text><text x="688.3" y="809.8" text-anchor="middle">2025-12-05</text><text x="763.0" y="809.8" text-anchor="middle">2025-12-05</text><text x="837.8" y="809.8" text-anchor="middle">2025-12-05</text><text x="912.6" y="809.8" text-anchor="middle">2025-12-05</text><text x="987.4" y="809.8" text-anchor="middle">2025-12-05</text><text x="1062.2" y="809.8" text-anchor="middle">2025-12-05</text><text x="1136.9" y="809.8" text-anchor="middle">2025-12-05</text><text x="1211.7" y="809.8" text-anchor="middle">2025-12-05</text><text x="1286.5" y="809.8" text-anchor="middle">2025-12-05</text><text x="1361.3" y="809.8" text-anchor="middle">2025-12-05</text><text x="1436.1" y="809.8" text-anchor="middle">2025-12-05</text><text x="1510.8" y="809.8" text-anchor="middle">2025-12-05</text><text x="1585.6" y="809.8" text-anchor="middle">2025-12-05</text><g fill="none" stroke="#333" stroke-width="0.95"><circle cx="494.5" cy="657.6" r="2.15"/><circle cx="488.4" cy="664.5" r="2.15"/><path d="M485.7 657.5L497 663.5" stroke-width="0.85"/></g></g></svg>
</div>
</body>
</html>
